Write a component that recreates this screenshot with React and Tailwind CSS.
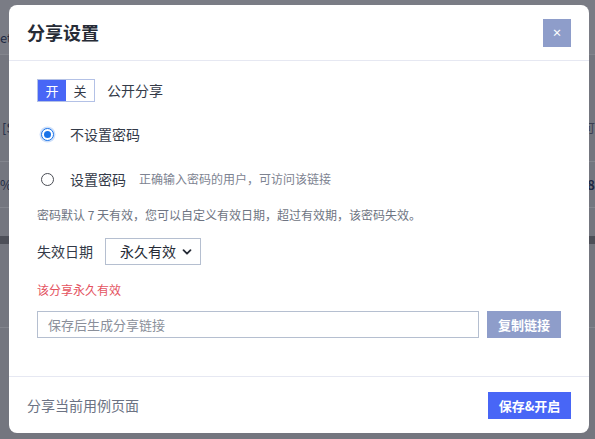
const font = { fontFamily: '"Noto Sans CJK SC", "Noto Sans", sans-serif' };

function Backdrop() {
  // the page behind the dimmed overlay; only its edges are visible
  return (
    <div className="flex h-full flex-col bg-[#74767f] text-[#1e2a44]">
      <div className="h-[55px] shrink-0 border-b border-[#83858d] bg-[#7a7c85] flex items-start">
        <span className="pt-[28px] text-[13px] leading-[20px]">etv</span>
      </div>
      <div className="h-[107px] shrink-0 border-b border-[#83858d] flex items-center justify-between">
        <span className="text-[13px] pl-[2px] pt-[40px]">[S</span>
        <span className="text-[12px] pt-[40px] text-[#3a4052]">表可</span>
      </div>
      <div className="h-[46px] shrink-0 border-b border-[#83858d] flex items-center justify-between">
        <span className="text-[13px]">%</span>
        <span className="text-[13px] font-bold">48</span>
      </div>
      <div className="h-[28px] shrink-0" />
      <div className="h-[8px] shrink-0 bg-[#4d4f58]" />
      <div className="h-[84px] shrink-0 border-b border-[#83858d]" />
      <div className="flex-1" />
    </div>
  );
}

function Radio({ checked, children }) {
  return (
    <label className="flex h-[20px] items-center">
      <span className="flex w-[33px] items-center">
        {checked ? (
          <span className="ml-[4px] flex h-[13px] w-[13px] items-center justify-center rounded-full border-[1.5px] border-[#1a73e8] bg-white shadow-[0_0_0_1.5px_#cfe0fa]">
            <span className="h-[7px] w-[7px] rounded-full bg-[#1a73e8]" />
          </span>
        ) : (
          <span className="ml-[4px] h-[13px] w-[13px] rounded-full border-[1.5px] border-[#4a4d55] bg-white" />
        )}
      </span>
      {children}
    </label>
  );
}

export default function App() {
  return (
    <div className="relative h-[439px] w-[595px] overflow-hidden" style={font}>
      <Backdrop />

      <div className="absolute left-[9px] top-[5px] flex h-[428px] w-[580px] flex-col rounded-[8px] bg-white">
        <div className="flex h-[56px] shrink-0 items-center justify-between border-b border-[#e6e8f2] pl-[18px] pr-[18px]">
          <h2 className="text-[18px] font-bold text-[#262b36]">分享设置</h2>
          <button className="flex h-[28px] w-[28px] items-center justify-center bg-[#8e9dca] text-[10px] font-bold leading-none text-white">
            ×
          </button>
        </div>

        <div className="flex flex-1 flex-col px-[28px] pt-[18px] text-[#333a48]">
          <div className="flex h-[23px] items-center">
            <div className="flex h-[23px] border border-[#b3c1e6] text-[13px]">
              <span className="flex w-[28px] items-center justify-center bg-[#4866f6] text-white">开</span>
              <span className="flex w-[28px] items-center justify-center bg-white text-[#333a48]">关</span>
            </div>
            <span className="ml-[12px] text-[14px]">公开分享</span>
          </div>

          <div className="mt-[22px]">
            <Radio checked>
              <span className="text-[14px]">不设置密码</span>
            </Radio>
          </div>

          <div className="mt-[25px]">
            <Radio>
              <span className="text-[14px]">设置密码</span>
              <span className="ml-[13px] text-[12px] text-[#7d8391]">正确输入密码的用户，可访问该链接</span>
            </Radio>
          </div>

          <p className="mt-[17px] text-[12px] leading-[18px] text-[#6e7482]">
            密码默认 7 天有效，您可以自定义有效日期，超过有效期，该密码失效。
          </p>

          <div className="mt-[14px] flex h-[27px] items-center">
            <span className="text-[14px]">失效日期</span>
            <div className="ml-[12px] flex h-[27px] w-[96px] items-center justify-between border border-[#b5bfd0] pl-[14px] pr-[8px]">
              <span className="text-[14px] text-[#262b36]">永久有效</span>
              <svg width="10" height="10" viewBox="0 0 10 10" fill="none">
                <path d="M1.5 3.2 5 6.7 8.5 3.2" stroke="#262b36" strokeWidth="1.8" strokeLinecap="round" strokeLinejoin="round" />
              </svg>
            </div>
          </div>

          <p className="mt-[16px] text-[12px] leading-[18px] text-[#e4535f]">该分享永久有效</p>

          <div className="mt-[12px] flex h-[27px] items-center">
            <div className="flex h-[27px] w-[442px] items-center border border-[#b5bfd0] px-[10px] text-[13px] text-[#8a8f9a]">
              保存后生成分享链接
            </div>
            <button className="ml-[8px] h-[27px] w-[74px] bg-[#8e9dca] text-[13px] font-bold text-white">
              复制链接
            </button>
          </div>
        </div>

        <div className="flex h-[57px] shrink-0 items-center justify-between border-t border-[#e6e8f2] pl-[18px] pr-[18px]">
          <span className="text-[14px] text-[#6b7283]">分享当前用例页面</span>
          <button className="mt-[1px] h-[27px] w-[83px] bg-[#4866f6] text-[13px] font-bold text-white">
            保存&amp;开启
          </button>
        </div>
      </div>
    </div>
  );
}
